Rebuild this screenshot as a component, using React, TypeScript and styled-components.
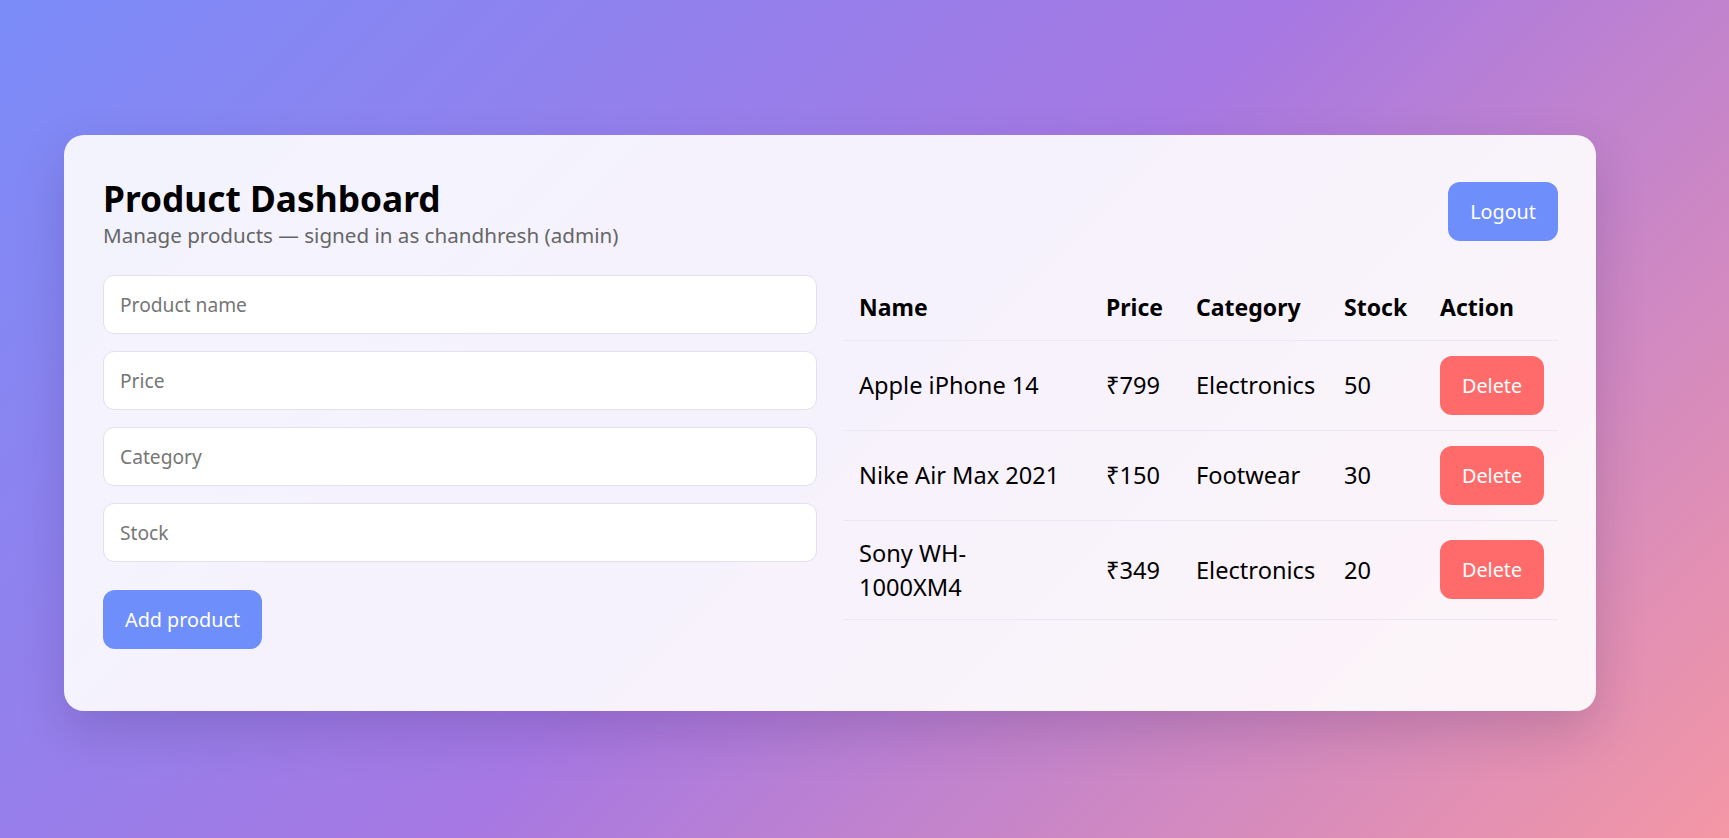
import React from "react";
import styled, { createGlobalStyle } from "styled-components";

const GlobalStyle = createGlobalStyle`
  * { box-sizing: border-box; }
  html, body {
    margin: 0;
    padding: 0;
  }
  body {
    font-family: "Noto Sans", "Open Sans", sans-serif;
    min-height: 100vh;
    background: linear-gradient(135deg, #7b8cf9 0%, #a678e3 50%, #f497a5 100%);
    background-attachment: fixed;
  }
`;

const Page = styled.div`
  min-height: 100vh;
  padding: 135px 0 0 64px;
`;

const Card = styled.div`
  width: 1532px;
  padding: 43px 38px 62px 39px;
  border-radius: 20px;
  background: rgba(255, 255, 255, 0.9);
  box-shadow: 0 20px 50px rgba(40, 20, 80, 0.18);
`;

const Header = styled.header`
  display: flex;
  justify-content: space-between;
  align-items: flex-start;
  margin-bottom: 26px;
`;

const TitleBlock = styled.div`
  display: flex;
  flex-direction: column;
`;

const Title = styled.h1`
  margin: 0;
  font-size: 35.3px;
  line-height: 41px;
  font-weight: 700;
  color: #000;
`;

const Subtitle = styled.p`
  margin: 3px 0 0;
  font-size: 20.6px;
  line-height: 27px;
  color: #666;
`;

const Button = styled.button<{ $variant?: "primary" | "danger" }>`
  font-family: inherit;
  font-size: 19.8px;
  line-height: 27px;
  padding: 16px 22px;
  border: none;
  border-radius: 12px;
  color: #fff;
  cursor: pointer;
  background: ${(p) => (p.$variant === "danger" ? "#ff6b6b" : "#6e8efb")};
`;

const LogoutButton = styled(Button)`
  margin-top: 4px;
`;

const Body = styled.div`
  display: grid;
  grid-template-columns: 1fr 1fr;
  column-gap: 26px;
  align-items: start;
`;

const Form = styled.form`
  display: flex;
  flex-direction: column;
  align-items: flex-start;
`;

const Field = styled.input`
  width: 100%;
  height: 59px;
  margin-bottom: 17px;
  padding: 0 16px;
  font-family: inherit;
  font-size: 19.2px;
  color: #222;
  background: #fff;
  border: 1px solid #e3e1ee;
  border-radius: 11px;
  outline: none;
  &::placeholder {
    color: #767676;
  }
`;

const AddButton = styled(Button)`
  margin-top: 11px;
`;

const Table = styled.table`
  width: 100%;
  border-collapse: collapse;
  table-layout: fixed;
  color: #000;
`;

const Th = styled.th`
  text-align: left;
  font-size: 23px;
  line-height: 34.5px;
  font-weight: 700;
  padding: 15px 16px;
  border-bottom: 1px solid #ebe8f1;
  white-space: nowrap;
`;

const Td = styled.td<{ $wrap?: boolean }>`
  font-size: 23.6px;
  line-height: 34.2px;
  padding: 15px ${(p) => (p.$wrap ? "26px" : "16px")} 15px 16px;
  border-bottom: 1px solid #ebe8f1;
  vertical-align: middle;
  white-space: ${(p) => (p.$wrap ? "normal" : "nowrap")};
`;

type Product = { name: string; price: number; category: string; stock: number };

const products: Product[] = [
  { name: "Apple iPhone 14", price: 799, category: "Electronics", stock: 50 },
  { name: "Nike Air Max 2021", price: 150, category: "Footwear", stock: 30 },
  { name: "Sony WH-1000XM4", price: 349, category: "Electronics", stock: 20 },
];

const columns = [247, 90, 148, 96, 134];

export default function App() {
  return (
    <>
      <GlobalStyle />
      <Page>
        <Card>
          <Header>
            <TitleBlock>
              <Title>Product Dashboard</Title>
              <Subtitle>Manage products — signed in as chandhresh (admin)</Subtitle>
            </TitleBlock>
            <LogoutButton type="button">Logout</LogoutButton>
          </Header>
          <Body>
            <Form onSubmit={(e) => e.preventDefault()}>
              <Field placeholder="Product name" />
              <Field placeholder="Price" />
              <Field placeholder="Category" />
              <Field placeholder="Stock" />
              <AddButton type="submit">Add product</AddButton>
            </Form>
            <Table>
              <colgroup>
                {columns.map((w, i) => (
                  <col key={i} style={{ width: w }} />
                ))}
              </colgroup>
              <thead>
                <tr>
                  <Th>Name</Th>
                  <Th>Price</Th>
                  <Th>Category</Th>
                  <Th>Stock</Th>
                  <Th>Action</Th>
                </tr>
              </thead>
              <tbody>
                {products.map((p) => (
                  <tr key={p.name}>
                    <Td $wrap>{p.name}</Td>
                    <Td>₹{p.price}</Td>
                    <Td>{p.category}</Td>
                    <Td>{p.stock}</Td>
                    <Td>
                      <Button type="button" $variant="danger">
                        Delete
                      </Button>
                    </Td>
                  </tr>
                ))}
              </tbody>
            </Table>
          </Body>
        </Card>
      </Page>
    </>
  );
}
